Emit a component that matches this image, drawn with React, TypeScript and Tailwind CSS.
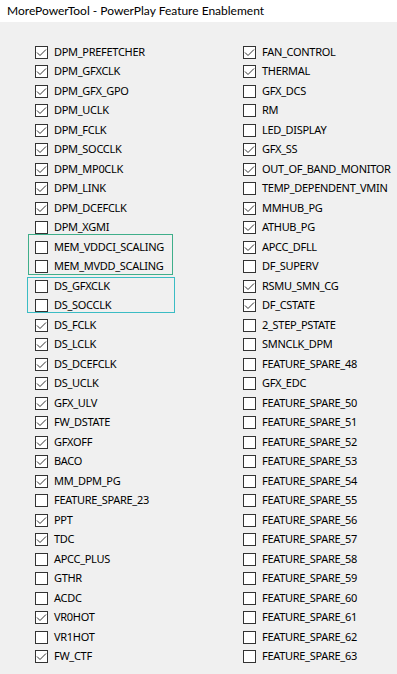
import React from "react";

type Item = { label: string; checked: boolean };

const left: Item[] = [
  ["DPM_PREFETCHER", 1], ["DPM_GFXCLK", 1], ["DPM_GFX_GPO", 1], ["DPM_UCLK", 1],
  ["DPM_FCLK", 1], ["DPM_SOCCLK", 1], ["DPM_MP0CLK", 1], ["DPM_LINK", 1],
  ["DPM_DCEFCLK", 1], ["DPM_XGMI", 0], ["MEM_VDDCI_SCALING", 0], ["MEM_MVDD_SCALING", 0],
  ["DS_GFXCLK", 0], ["DS_SOCCLK", 0], ["DS_FCLK", 1], ["DS_LCLK", 1],
  ["DS_DCEFCLK", 1], ["DS_UCLK", 1], ["GFX_ULV", 1], ["FW_DSTATE", 1],
  ["GFXOFF", 1], ["BACO", 1], ["MM_DPM_PG", 1], ["FEATURE_SPARE_23", 0],
  ["PPT", 1], ["TDC", 1], ["APCC_PLUS", 0], ["GTHR", 0],
  ["ACDC", 0], ["VR0HOT", 1], ["VR1HOT", 0], ["FW_CTF", 1],
].map(([l, c]) => ({ label: l as string, checked: !!c }));

const right: Item[] = [
  ["FAN_CONTROL", 1], ["THERMAL", 1], ["GFX_DCS", 0], ["RM", 0],
  ["LED_DISPLAY", 0], ["GFX_SS", 1], ["OUT_OF_BAND_MONITOR", 1], ["TEMP_DEPENDENT_VMIN", 0],
  ["MMHUB_PG", 1], ["ATHUB_PG", 1], ["APCC_DFLL", 1], ["DF_SUPERV", 0],
  ["RSMU_SMN_CG", 1], ["DF_CSTATE", 1], ["2_STEP_PSTATE", 0], ["SMNCLK_DPM", 0],
  ["FEATURE_SPARE_48", 0], ["GFX_EDC", 0], ["FEATURE_SPARE_50", 0], ["FEATURE_SPARE_51", 0],
  ["FEATURE_SPARE_52", 0], ["FEATURE_SPARE_53", 0], ["FEATURE_SPARE_54", 0], ["FEATURE_SPARE_55", 0],
  ["FEATURE_SPARE_56", 0], ["FEATURE_SPARE_57", 0], ["FEATURE_SPARE_58", 0], ["FEATURE_SPARE_59", 0],
  ["FEATURE_SPARE_60", 0], ["FEATURE_SPARE_61", 0], ["FEATURE_SPARE_62", 0], ["FEATURE_SPARE_63", 0],
].map(([l, c]) => ({ label: l as string, checked: !!c }));

function Box({ checked }: { checked: boolean }) {
  return (
    <span className="flex h-[13px] w-[13px] shrink-0 items-center justify-center border border-[#333333] bg-white">
      {checked && (
        <svg width="11" height="11" viewBox="0 0 11 11" fill="none">
          <path d="M1 5.5 L4 8.5 L10 2.5" stroke="#333333" strokeWidth="1" />
        </svg>
      )}
    </span>
  );
}

function Row({ item, index }: { item: Item; index: number }) {
  return (
    <div className={`flex items-center gap-[6px] ${index % 2 === 0 ? "h-[20px]" : "h-[19px]"}`}>
      <Box checked={item.checked} />
      <span
        className="whitespace-nowrap pb-[1px] text-[11px] leading-[14px] tracking-[-0.3px] text-black"
        style={{ fontFamily: '"Noto Sans", sans-serif' }}
      >
        {item.label}
      </span>
    </div>
  );
}

export default function App() {
  return (
    <div
      className="flex h-[674px] w-[397px] flex-col overflow-hidden bg-[#f0f0f0]"
      style={{ fontFamily: 'Lato, "Noto Sans", sans-serif' }}
    >
      <div className="flex h-[22px] items-center bg-white pl-[7px] text-[12px] text-black">
        MorePowerTool - PowerPlay Feature Enablement
      </div>
      <div className="grid grid-cols-[208px_1fr] pl-[35px] pt-[20px]">
        <div className="flex flex-col">
          {left.slice(0, 10).map((it, i) => (
            <Row key={it.label} item={it} index={i} />
          ))}
          <div className="relative">
            <span className="pointer-events-none absolute -top-[3px] bottom-[1px] -left-[7px] w-[145px] border border-[#3fae8a]" />
            {left.slice(10, 12).map((it, i) => (
              <Row key={it.label} item={it} index={10 + i} />
            ))}
          </div>
          <div className="relative">
            <span className="pointer-events-none absolute top-[1px] bottom-[2px] -left-[8px] w-[148px] border border-[#3bbcc4]" />
            {left.slice(12, 14).map((it, i) => (
              <Row key={it.label} item={it} index={12 + i} />
            ))}
          </div>
          {left.slice(14).map((it, i) => (
            <Row key={it.label} item={it} index={14 + i} />
          ))}
        </div>
        <div className="flex flex-col">
          {right.map((it, i) => (
            <Row key={it.label} item={it} index={i} />
          ))}
        </div>
      </div>
    </div>
  );
}
